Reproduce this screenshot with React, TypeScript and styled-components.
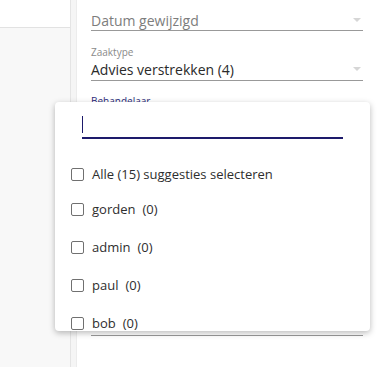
import React from "react";
import styled, { createGlobalStyle } from "styled-components";

const Global = createGlobalStyle`
  html, body { margin: 0; padding: 0; background: #fff; }
  body { font-family: "Open Sans", "Liberation Sans", sans-serif; }
  * { box-sizing: border-box; }
`;

const Page = styled.div`
  position: relative;
  display: flex;
  width: 377px;
  height: 367px;
  overflow: hidden;
  background: #fff;
`;

const LeftPane = styled.div`
  width: 71px;
  display: flex;
  flex-direction: column;
  border-right: 1px solid #e4e4e4;
  background: #f8f8f8;
`;

const TopBar = styled.div`
  height: 28px;
  background: #fff;
  border-bottom: 1px solid #e2e2e2;
`;

const Strip = styled.div`
  width: 6px;
  background: #f5f5f5;
  border-right: 1px solid #ececec;
`;

const Panel = styled.div`
  flex: 1;
  padding: 10px 14px 0 14px;
  display: flex;
  flex-direction: column;
`;

const Field = styled.div<{ $gap?: number }>`
  display: flex;
  flex-direction: column;
  margin-top: ${(p) => p.$gap ?? 0}px;
`;

const Label = styled.div<{ $focus?: boolean }>`
  font-size: 10px;
  line-height: 12px;
  color: ${(p) => (p.$focus ? "#2b2a7a" : "#8a8a8a")};
`;

const Value = styled.div<{ $placeholder?: boolean; $h?: number }>`
  display: flex;
  align-items: center;
  justify-content: space-between;
  height: ${(p) => p.$h ?? 21}px;
  font-size: 14px;
  color: ${(p) => (p.$placeholder ? "#7d7d7d" : "#2a2a2a")};
  border-bottom: 1px solid #999;
  padding-right: 2px;
`;

const Arrow = styled.span`
  width: 0;
  height: 0;
  border-left: 4px solid transparent;
  border-right: 4px solid transparent;
  border-top: 4px solid #d6d6d6;
`;

const Popup = styled.div`
  position: absolute;
  left: 55px;
  top: 102px;
  width: 315px;
  height: 229px;
  background: #fff;
  border-radius: 4px;
  box-shadow: 0 2px 6px rgba(0, 0, 0, 0.28);
  overflow: hidden;
  display: flex;
  flex-direction: column;
`;

const SearchBox = styled.div`
  margin: 14px 27px 0 27px;
  height: 23px;
  border-bottom: 2px solid #1d1a6b;
  display: flex;
  align-items: flex-start;
  flex-shrink: 0;
`;

const Caret = styled.span`
  width: 1px;
  height: 17px;
  background: #1d1a6b;
`;

const List = styled.div`
  display: flex;
  flex-direction: column;
  padding: 29px 0 0 16px;
`;

const Row = styled.div<{ $h: number }>`
  display: flex;
  align-items: center;
  height: ${(p) => p.$h}px;
  flex-shrink: 0;
`;

const Box = styled.span`
  width: 13px;
  height: 13px;
  border: 1px solid #707070;
  border-radius: 2px;
  flex-shrink: 0;
`;

const RowText = styled.span`
  margin-left: 8px;
  font-size: 13px;
  line-height: 13px;
  color: #2e2e2e;
  white-space: nowrap;
`;

const Count = styled.span`
  margin-left: 7px;
`;

const RowWrap = styled.div<{ $h: number }>`
  height: ${(p) => p.$h}px;
  flex-shrink: 0;
`;

const users = ["gorden", "admin", "paul", "bob"];

export default function App() {
  return (
    <Page>
      <Global />
      <LeftPane>
        <TopBar />
      </LeftPane>
      <Strip />
      <Panel>
        <Field>
          <Value $placeholder>
            <span>Datum gewijzigd</span>
            <Arrow />
          </Value>
        </Field>
        <Field $gap={15}>
          <Label>Zaaktype</Label>
          <Value $h={23}>
            <span>Advies verstrekken (4)</span>
            <Arrow />
          </Value>
        </Field>
        <Field $gap={14}>
          <Label $focus>Behandelaar</Label>
          <Value $h={229} />
        </Field>
      </Panel>
      <Popup>
        <SearchBox>
          <Caret />
        </SearchBox>
        <List>
          <RowWrap $h={35}>
            <Row $h={13}>
              <Box />
              <RowText>Alle (15) suggesties selecteren</RowText>
            </Row>
          </RowWrap>
          {users.map((u) => (
            <RowWrap $h={38} key={u}>
              <Row $h={13}>
                <Box />
                <RowText>
                  {u}
                  <Count>(0)</Count>
                </RowText>
              </Row>
            </RowWrap>
          ))}
        </List>
      </Popup>
    </Page>
  );
}
